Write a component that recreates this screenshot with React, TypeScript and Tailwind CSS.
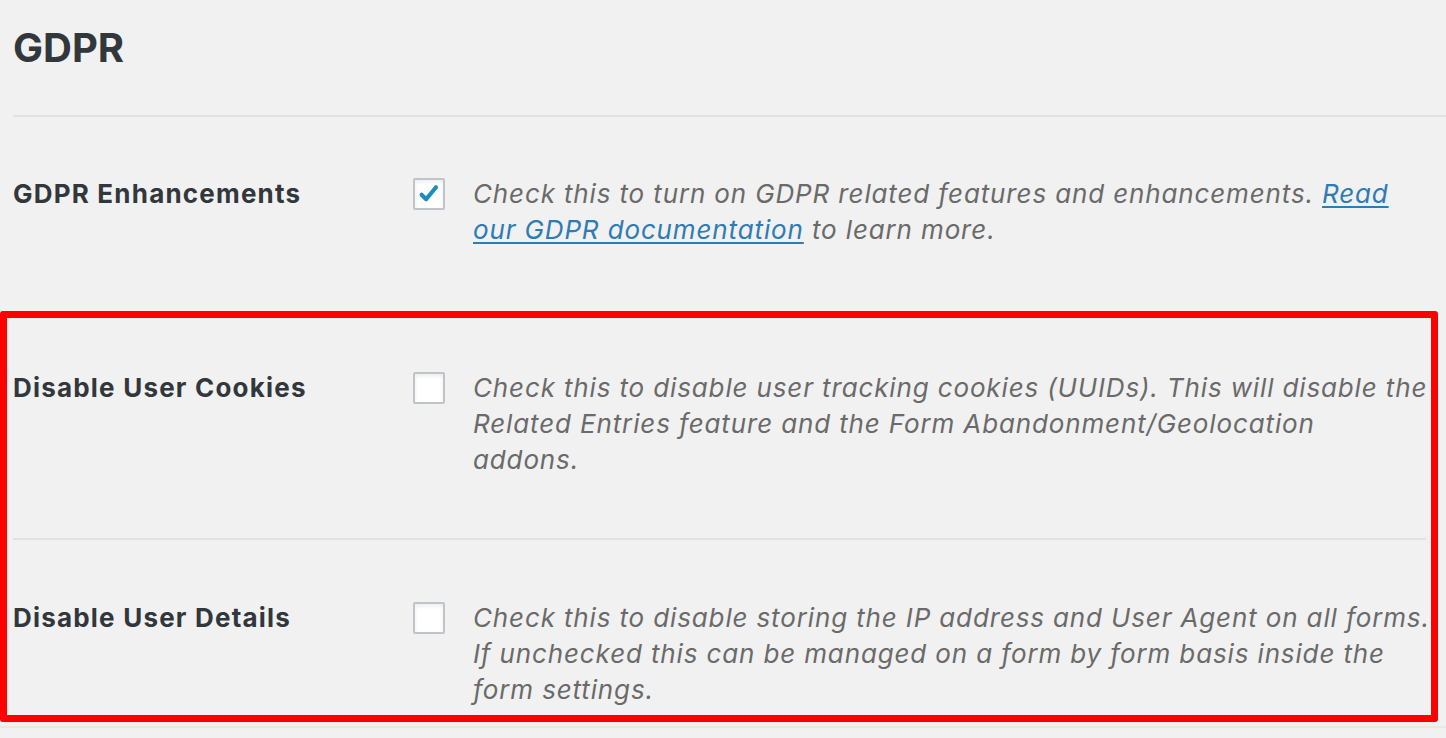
import React from "react";

function Check({ checked }: { checked?: boolean }) {
  return (
    <div className="mt-[2px] w-[32px] h-[32px] shrink-0 bg-white border-2 border-[#c0c4c8] rounded-[2px] shadow-[inset_0_2px_4px_rgba(0,0,0,0.08)] flex items-center justify-center">
      {checked && (
        <svg width="26" height="26" viewBox="0 0 20 20">
          <path d="M4.3 10.6 L7.8 14 L15.4 4.8" fill="none" stroke="#1e8cbe" strokeWidth="3.2" strokeLinecap="round" strokeLinejoin="round" />
        </svg>
      )}
    </div>
  );
}

function Row({
  label,
  checked,
  lines,
}: {
  label: string;
  checked?: boolean;
  lines: React.ReactNode[];
}) {
  return (
    <div className="flex">
      <div className="w-[400px] shrink-0 text-[26px] leading-[36px] font-bold tracking-[1.2px] text-[#32373c] whitespace-nowrap">
        {label}
      </div>
      <Check checked={checked} />
      <div className="ml-[28px] text-[26px] leading-[36px] italic tracking-[0.86px] text-[#6a6a6a]">
        {lines.map((l, i) => (
          <div key={i} className="whitespace-nowrap">
            {l}
          </div>
        ))}
      </div>
    </div>
  );
}

export default function App() {
  return (
    <div className="h-[738px] w-[1446px] overflow-hidden bg-[#f1f1f1] font-['Inter',sans-serif]">
      <div className="pl-[13px] pt-[27px]">
        <h2 className="text-[40px] leading-[42px] font-bold text-[#32373c]">GDPR</h2>
      </div>
      <div className="ml-[13px] mt-[46px] h-[2px] bg-[#e2e2e2]" />
      <div className="pl-[13px] pt-[59px] pb-[63px]">
        <Row
          label="GDPR Enhancements"
          checked
          lines={[
            <>
              Check this to turn on GDPR related features and enhancements.{" "}
              <a className="text-[#2f7bb4] underline underline-offset-[3px]" href="#">
                Read
              </a>
            </>,
            <>
              <a className="text-[#2f7bb4] underline underline-offset-[3px]" href="#">
                our GDPR documentation
              </a>{" "}
              to learn more.
            </>,
          ]}
        />
      </div>
      <div className="w-[1438px] border-[7px] border-[#ff0000] rounded-[3px]">
        <div className="pl-[6px] pt-[52px]">
          <Row
            label="Disable User Cookies"
            lines={[
              "Check this to disable user tracking cookies (UUIDs). This will disable the",
              "Related Entries feature and the Form Abandonment/Geolocation",
              "addons.",
            ]}
          />
        </div>
        <div className="ml-[6px] mr-[5px] mt-[60px] h-[2px] bg-[#e2e2e2]" />
        <div className="pl-[6px] pt-[60px] pb-[7px]">
          <Row
            label="Disable User Details"
            lines={[
              "Check this to disable storing the IP address and User Agent on all forms.",
              "If unchecked this can be managed on a form by form basis inside the",
              "form settings.",
            ]}
          />
        </div>
      </div>
      <div className="mt-[4px] h-[2px] bg-[#e6e8ea]" />
    </div>
  );
}
